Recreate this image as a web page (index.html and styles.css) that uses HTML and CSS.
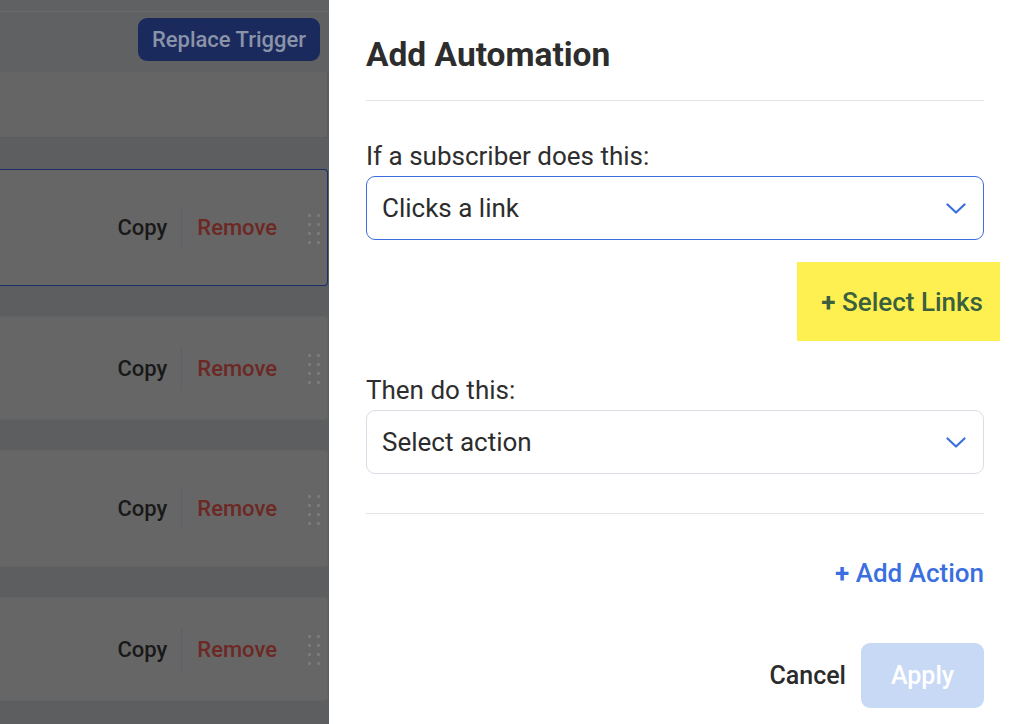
FILE: index.html
```html
<!DOCTYPE html>
<html>
<head>
<meta charset="utf-8">
<link rel="stylesheet" href="styles.css">
</head>
<body>
<div class="screen">
  <div class="backdrop">
    <div class="topstrip"></div>
    <div class="toolbar">
      <button class="replace-btn">Replace Trigger</button>
    </div>
    <div class="trigger-card"></div>
    <div class="step-list">
      <div class="step step-tall step-selected">
        <span class="step-copy">Copy</span><span class="step-sep"></span><span class="step-remove">Remove</span>
        <span class="grip"><i></i><i></i><i></i><i></i><i></i><i></i><i></i><i></i></span>
      </div>
      <div class="step step-short">
        <span class="step-copy">Copy</span><span class="step-sep"></span><span class="step-remove">Remove</span>
        <span class="grip"><i></i><i></i><i></i><i></i><i></i><i></i><i></i><i></i></span>
      </div>
      <div class="step step-tall">
        <span class="step-copy">Copy</span><span class="step-sep"></span><span class="step-remove">Remove</span>
        <span class="grip"><i></i><i></i><i></i><i></i><i></i><i></i><i></i><i></i></span>
      </div>
      <div class="step step-short">
        <span class="step-copy">Copy</span><span class="step-sep"></span><span class="step-remove">Remove</span>
        <span class="grip"><i></i><i></i><i></i><i></i><i></i><i></i><i></i><i></i></span>
      </div>
    </div>
  </div>
  <div class="drawer">
    <h1 class="drawer-title">Add Automation</h1>
    <div class="rule rule-head"></div>
    <label class="field-label label-first">If a subscriber does this:</label>
    <div class="select select-active">
      <span>Clicks a link</span>
      <svg class="chev" width="20" height="11" viewBox="0 0 20 11"><path d="M1.5 1.5 L10 9.5 L18.5 1.5" fill="none" stroke="#3b6fe0" stroke-width="2.2" stroke-linecap="round" stroke-linejoin="round"/></svg>
    </div>
    <div class="links-row">
      <span class="select-links"><b class="plus">+</b> Select Links</span>
    </div>
    <label class="field-label label-second">Then do this:</label>
    <div class="select">
      <span>Select action</span>
      <svg class="chev" width="20" height="11" viewBox="0 0 20 11"><path d="M1.5 1.5 L10 9.5 L18.5 1.5" fill="none" stroke="#3b6fe0" stroke-width="2.2" stroke-linecap="round" stroke-linejoin="round"/></svg>
    </div>
    <div class="rule rule-mid"></div>
    <div class="add-row">
      <span class="add-action"><b class="plus">+</b> Add Action</span>
    </div>
    <div class="footer">
      <span class="cancel">Cancel</span>
      <button class="apply">Apply</button>
    </div>
  </div>
</div>
</body>
</html>
```

FILE: styles.css
```css
* { box-sizing: border-box; }
html, body { margin: 0; padding: 0; }
body {
  width: 1014px;
  height: 724px;
  overflow: hidden;
  font-family: Roboto, "Liberation Sans", sans-serif;
  background: #fff;
}
.screen {
  display: flex;
  width: 1014px;
  height: 724px;
}
.backdrop {
  width: 329px;
  flex: none;
  background: #5d5e60;
  display: flex;
  flex-direction: column;
}
.topstrip {
  height: 12px;
  background: #606163;
  border-bottom: 1px solid #686a6c;
}
.toolbar {
  height: 60px;
  display: flex;
  justify-content: flex-end;
  align-items: center;
  padding-right: 9px;
  background: #606163;
}
.replace-btn {
  height: 43px;
  width: 182px;
  border: none;
  border-radius: 9px;
  background: #1b2a5c;
  color: #8a93a9;
  font-family: Roboto, sans-serif;
  font-size: 22px;
  font-weight: 500;
  padding: 0;
  margin-top: -5px;
}
.trigger-card {
  height: 66px;
  margin-right: 1px;
  background: #656565;
  border-right: 1px solid #5b5c5e;
  border-bottom: 1px solid #5b5c5e;
  border-bottom-right-radius: 3px;
}
.step-list {
  margin-top: 31px;
  margin-right: 1px;
  display: flex;
  flex-direction: column;
  gap: 30px;
}
.step {
  background: #666666;
  border: 1px solid #626365;
  border-left: none;
  border-radius: 0 4px 4px 0;
  display: flex;
  align-items: center;
  justify-content: flex-end;
  padding-right: 7px;
  font-size: 22px;
  font-weight: 500;
}
.step-tall { height: 117px; }
.step-short { height: 104px; }
.step-selected { border-color: #1d2f6a; }
.step-copy { color: #191919; }
.step-sep {
  width: 1px;
  height: 43px;
  background: #5a5e6e;
  margin: 0 15px 0 14px;
}
.step-remove { color: #6d2824; }
.grip {
  display: grid;
  grid-template-columns: 3px 3px;
  column-gap: 6px;
  row-gap: 6px;
  margin-left: 31px;
  margin-top: 2px;
}
.grip i {
  width: 3px;
  height: 3px;
  background: #7a7b7d;
  border-radius: 1px;
  display: block;
}
.drawer {
  flex: 1;
  background: #fff;
  padding: 35px 30px 0 37px;
  display: flex;
  flex-direction: column;
  color: #2b2b2b;
}
.drawer-title {
  margin: 0;
  font-size: 33.5px;
  line-height: 40px;
  font-weight: 700;
  color: #2d2d2d;
}
.rule {
  height: 1px;
  background: #e3e3ea;
}
.rule-head { margin-top: 25px; }
.field-label {
  font-size: 26px;
  line-height: 30px;
  color: #2e2e2e;
}
.label-first { margin-top: 40px; }
.label-second { margin-top: 34px; }
.select {
  margin-top: 5px;
  height: 64px;
  border: 1px solid #dcdce6;
  border-radius: 9px;
  display: flex;
  align-items: center;
  justify-content: space-between;
  padding: 0 17px 0 15px;
  font-size: 26px;
  color: #2c2c2c;
}
.select-active { border-color: #3b6fe0; }
.chev { display: block; }
.links-row {
  display: flex;
  justify-content: flex-end;
  margin-top: 22px;
  margin-right: -16px;
}
.select-links {
  background: #fdf050;
  color: #3a6040;
  height: 79px;
  padding: 0 17px 0 24px;
  display: flex;
  align-items: center;
  font-size: 26px;
  font-weight: 500;
  white-space: pre;
}
.plus { font-weight: 700; }
.rule-mid { margin-top: 39px; }
.add-row {
  display: flex;
  justify-content: flex-end;
  margin-top: 44px;
}
.add-action {
  color: #3b6fe0;
  font-size: 26px;
  font-weight: 500;
  line-height: 30px;
  white-space: pre;
}
.footer {
  display: flex;
  justify-content: flex-end;
  align-items: center;
  margin-top: 55px;
}
.cancel {
  font-size: 25px;
  font-weight: 500;
  color: #2b2b2b;
  margin-right: 15px;
}
.apply {
  width: 123px;
  height: 65px;
  border: none;
  border-radius: 9px;
  background: #c8d9f6;
  color: #fff;
  font-family: Roboto, sans-serif;
  font-size: 25px;
  font-weight: 500;
  padding: 0;
}
```
